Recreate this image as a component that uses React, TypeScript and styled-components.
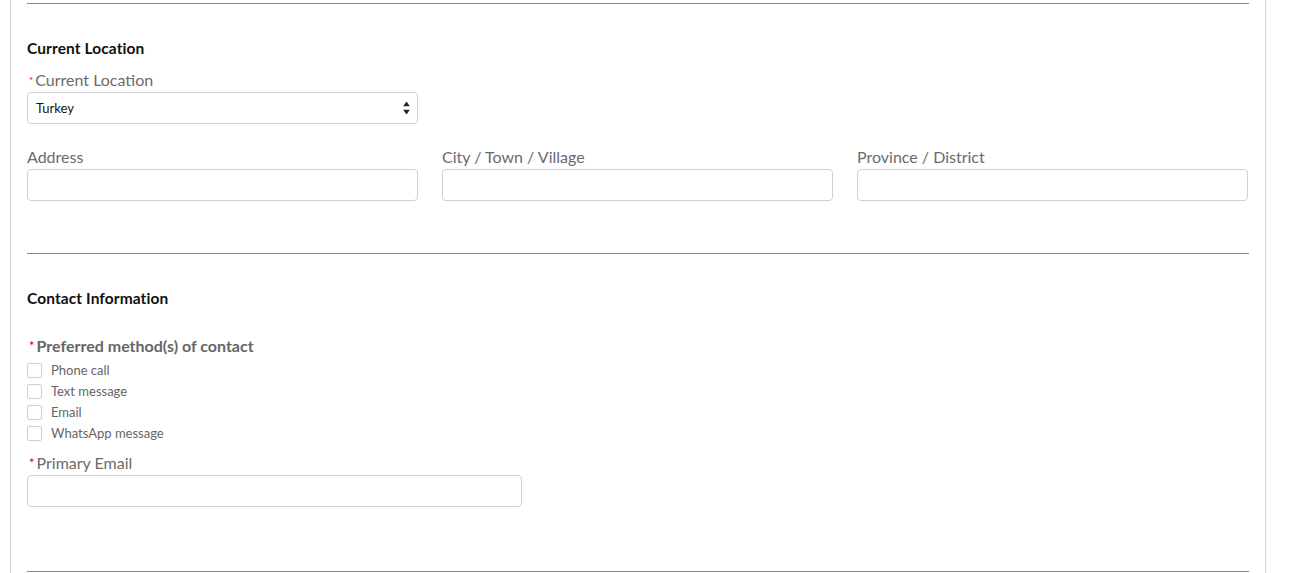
import React from "react";
import styled, { createGlobalStyle } from "styled-components";

const Global = createGlobalStyle`
  html, body { margin: 0; padding: 0; background: #fff; }
  body { font-family: Lato, "Open Sans", Arial, sans-serif; }
  * { box-sizing: border-box; }
`;

const Page = styled.div`
  padding-left: 10px;
  width: 1266px;
`;

const Panel = styled.div`
  border-left: 1px solid #d4d4d4;
  border-right: 1px solid #d4d4d4;
  padding: 3px 16px 0 16px;
  height: 573px;
  overflow: hidden;
`;

const Divider = styled.hr`
  margin: 0;
  border: 0;
  border-top: 1px solid #8a8a8a;
  height: 0;
`;

const Section = styled.section<{ $pad: string }>`
  padding: ${(p) => p.$pad};
`;

const Heading = styled.h3<{ $mb: number }>`
  margin: 0 0 ${(p) => p.$mb}px 0;
  font-size: 15.5px;
  font-weight: 700;
  color: #111;
  line-height: 18px;
  letter-spacing: 0.1px;
`;

const Label = styled.label<{ $bold?: boolean }>`
  display: block;
  font-size: 16px;
  font-weight: ${(p) => (p.$bold ? 700 : 400)};
  color: ${(p) => (p.$bold ? "#666" : "#6b6b6b")};
  line-height: 18px;
  margin-bottom: ${(p) => (p.$bold ? "7px" : "3px")};
`;

const Star = styled.span<{ $small?: boolean }>`
  color: #d0021b;
  font-size: ${(p) => (p.$small ? "10px" : "13px")};
  margin-left: 2px;
  margin-right: 2px;
  vertical-align: ${(p) => (p.$small ? "2px" : "1px")};
  font-weight: 400;
`;

const Field = styled.div<{ $width?: number }>`
  width: ${(p) => (p.$width ? `${p.$width}px` : "auto")};
`;

const Input = styled.input`
  display: block;
  width: 100%;
  height: 32px;
  border: 1px solid #d0d0d0;
  border-radius: 4px;
  padding: 0 8px;
  font-family: inherit;
  font-size: 13px;
  background: #fff;
  outline: none;
`;

const SelectBox = styled.div`
  position: relative;
  width: 100%;
  height: 32px;
  border: 1px solid #d0d0d0;
  border-radius: 4px;
  display: flex;
  align-items: center;
  padding: 0 8px;
  font-size: 13px;
  color: #111;
  background: #fff;
`;

const Arrows = styled.span`
  position: absolute;
  right: 7px;
  top: 50%;
  transform: translateY(-50%);
  display: flex;
  flex-direction: column;
  gap: 3px;
`;

const Grid3 = styled.div`
  display: grid;
  grid-template-columns: 391px 391px 391px;
  column-gap: 24px;
  margin-top: 24px;
`;

const CheckList = styled.div`
  display: flex;
  flex-direction: column;
  gap: 5px;
  margin-bottom: 13px;
`;

const CheckRow = styled.label`
  display: flex;
  align-items: center;
  gap: 9px;
  font-size: 13px;
  color: #666;
  height: 16px;
  line-height: 16px;
`;

const Box = styled.span`
  width: 15px;
  height: 15px;
  border: 1px solid #cfcfcf;
  border-radius: 2px;
  background: #fff;
  flex: none;
`;

const ArrowUp = () => (
  <svg width="7" height="5" viewBox="0 0 7 5"><path d="M3.5 0L7 5H0z" fill="#222" /></svg>
);
const ArrowDown = () => (
  <svg width="7" height="5" viewBox="0 0 7 5"><path d="M0 0h7L3.5 5z" fill="#222" /></svg>
);

export default function App() {
  return (
    <>
      <Global />
      <Page>
        <Panel>
          <Divider />
          <Section $pad="35px 0 0 0">
            <Heading $mb={14}>Current Location</Heading>
            <Field $width={391}>
              <Label>
                <Star $small>*</Star>Current Location
              </Label>
              <SelectBox>
                Turkey
                <Arrows>
                  <ArrowUp />
                  <ArrowDown />
                </Arrows>
              </SelectBox>
            </Field>
            <Grid3>
              <Field>
                <Label>Address</Label>
                <Input />
              </Field>
              <Field>
                <Label>City / Town / Village</Label>
                <Input />
              </Field>
              <Field>
                <Label>Province / District</Label>
                <Input />
              </Field>
            </Grid3>
          </Section>
          <Section $pad="52px 0 0 0">
            <Divider />
          </Section>
          <Section $pad="35px 0 0 0">
            <Heading $mb={30}>Contact Information</Heading>
            <Label $bold>
              <Star>*</Star>Preferred method(s) of contact
            </Label>
            <CheckList>
              <CheckRow><Box />Phone call</CheckRow>
              <CheckRow><Box />Text message</CheckRow>
              <CheckRow><Box />Email</CheckRow>
              <CheckRow><Box />WhatsApp message</CheckRow>
            </CheckList>
            <Field $width={495}>
              <Label>
                <Star>*</Star>Primary Email
              </Label>
              <Input />
            </Field>
          </Section>
          <Section $pad="64px 0 0 0">
            <Divider />
          </Section>
        </Panel>
      </Page>
    </>
  );
}
